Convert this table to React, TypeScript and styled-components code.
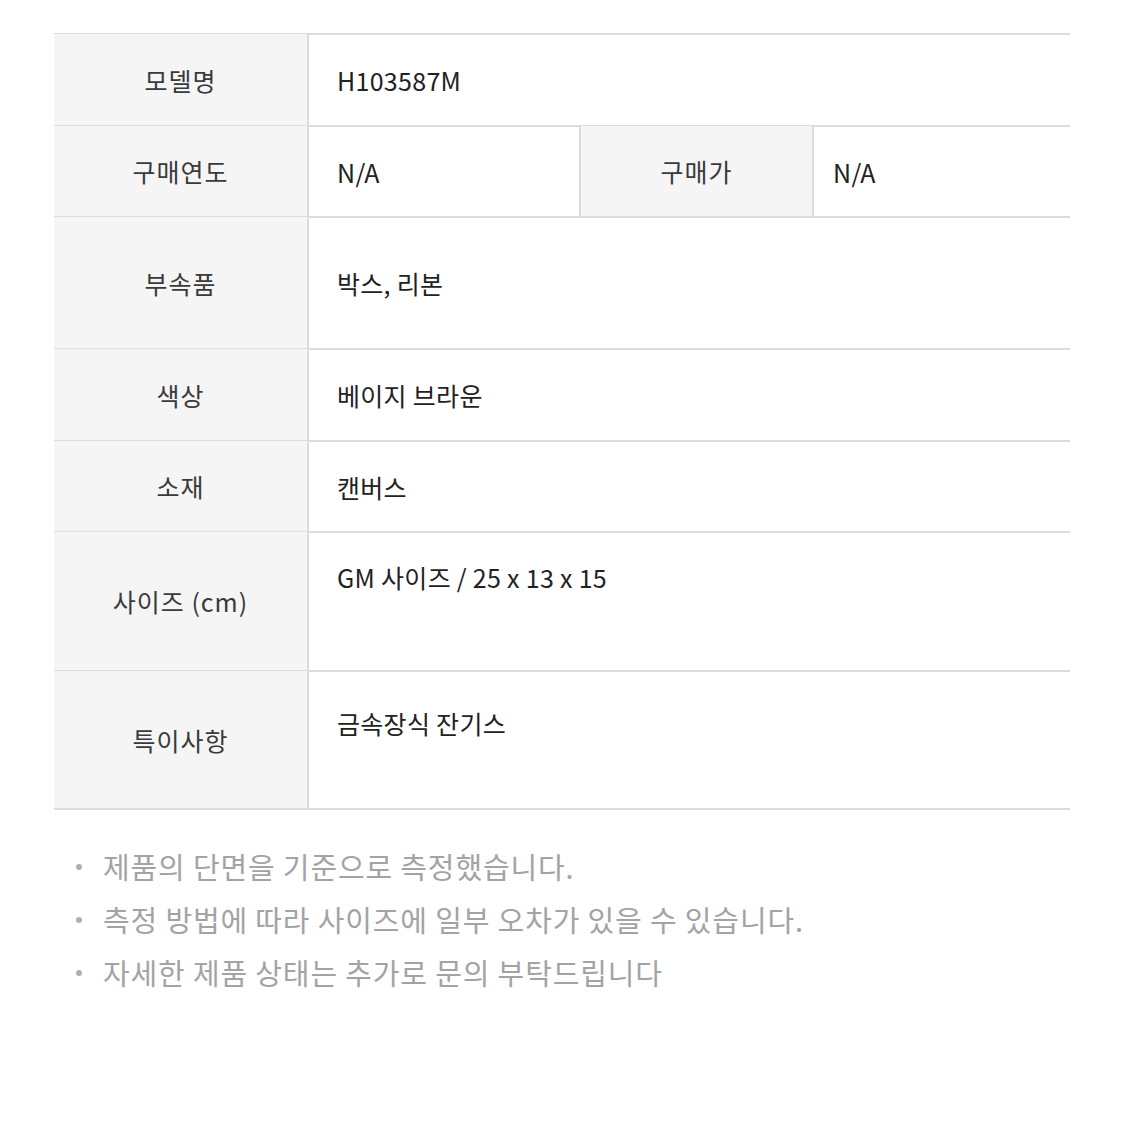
import React from 'react'
import styled, { createGlobalStyle } from 'styled-components'

const GlobalStyle = createGlobalStyle`
  body {
    margin: 0;
    background: #fff;
    font-family: 'Noto Sans CJK KR', 'Noto Sans', sans-serif;
  }
`

const Page = styled.div`
  width: 1125px;
  height: 1125px;
  padding: 33px 55px 0 54px;
  box-sizing: border-box;
`

const Table = styled.div`
  border-top: 2px solid #dcdcdc;
  display: flex;
  flex-direction: column;
`

const Row = styled.div<{ $h: number; $split?: boolean }>`
  display: grid;
  grid-template-columns: ${p => (p.$split ? '255px 270px 235px 1fr' : '255px 1fr')};
  height: ${p => p.$h}px;
  box-sizing: border-box;
  border-bottom: 2px solid #dcdcdc;
`

const Label = styled.div<{ $bordered?: boolean }>`
  background: #f5f5f5;
  color: #3a3a3a;
  font-size: 25px;
  letter-spacing: 1px;
  display: flex;
  align-items: center;
  justify-content: center;
  border-right: 2px solid #dcdcdc;
  ${p => (p.$bordered ? 'border-left: 2px solid #dcdcdc;' : '')}
  margin-top: -1px;
`

const Value = styled.div<{ $top?: number; $left?: number }>`
  color: #222;
  font-size: 25px;
  letter-spacing: 0.3px;
  padding-left: ${p => p.$left ?? 28}px;
  display: flex;
  align-items: ${p => (p.$top ? 'flex-start' : 'center')};
  padding-top: ${p => p.$top ?? 0}px;
  line-height: 34px;
`

const Notes = styled.ul`
  list-style: none;
  margin: 30px 0 0;
  padding: 0 0 0 22px;
`

const Note = styled.li`
  display: flex;
  align-items: center;
  gap: 21px;
  font-size: 29px;
  letter-spacing: 0.85px;
  line-height: 53px;
  color: #a3a3a3;
  &::before {
    content: '';
    width: 6px;
    height: 6px;
    border-radius: 50%;
    background: #b0b0b0;
  }
`

export default function App() {
  return (
    <Page>
      <GlobalStyle />
      <Table>
        <Row $h={92}>
          <Label>모델명</Label>
          <Value>H103587M</Value>
        </Row>
        <Row $h={91} $split>
          <Label>구매연도</Label>
          <Value>N/A</Value>
          <Label $bordered>구매가</Label>
          <Value $left={19}>N/A</Value>
        </Row>
        <Row $h={132}>
          <Label>부속품</Label>
          <Value>박스, 리본</Value>
        </Row>
        <Row $h={92}>
          <Label>색상</Label>
          <Value>베이지 브라운</Value>
        </Row>
        <Row $h={91}>
          <Label>소재</Label>
          <Value>캔버스</Value>
        </Row>
        <Row $h={139}>
          <Label>사이즈 (cm)</Label>
          <Value $top={27}>GM 사이즈 / 25 x 13 x 15</Value>
        </Row>
        <Row $h={138}>
          <Label>특이사항</Label>
          <Value $top={34}>금속장식 잔기스</Value>
        </Row>
      </Table>
      <Notes>
        <Note>제품의 단면을 기준으로 측정했습니다.</Note>
        <Note>측정 방법에 따라 사이즈에 일부 오차가 있을 수 있습니다.</Note>
        <Note>자세한 제품 상태는 추가로 문의 부탁드립니다</Note>
      </Notes>
    </Page>
  )
}
